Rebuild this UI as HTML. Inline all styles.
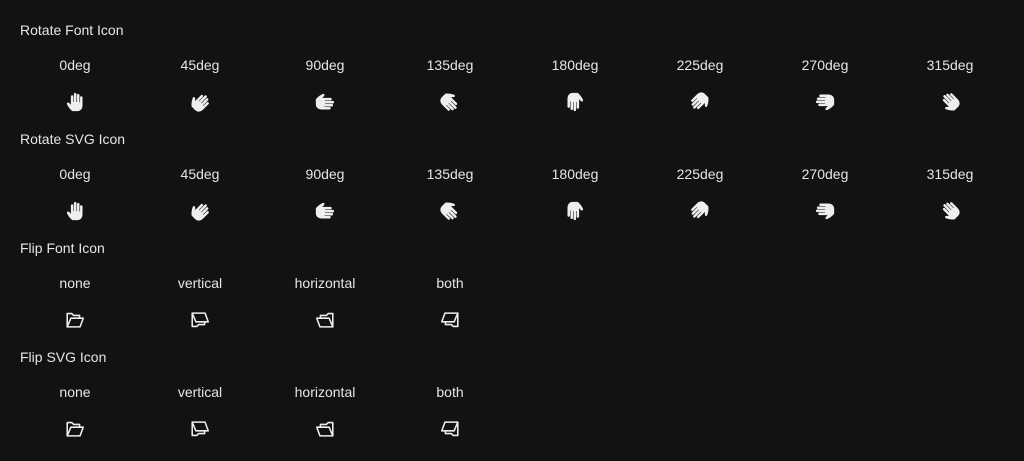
<!DOCTYPE html>
<html><head><style>
body{margin:0;background:#121212;color:#e6e6e6;font-family:"Liberation Sans",sans-serif;font-size:14px;width:1024px;height:461px;overflow:hidden;position:relative}
.h{position:absolute;left:20px}
.l{position:absolute;width:125px;text-align:center}
.i{position:absolute;width:22px;height:22px}
</style></head><body>
<svg width="0" height="0" style="position:absolute">
<defs>
<g id="hand"><path fill="#eee" d="M8 22 C5 19.5 3.5 17 2.3 14.5 C1.6 13 3.2 11.8 4.5 13 L6.5 15 V6 C6.5 4.2 9.2 4.2 9.2 6 V12 H9.8 V3.5 C9.8 1.6 12.6 1.6 12.6 3.5 V12 H13.2 V4.5 C13.2 2.7 15.9 2.7 15.9 4.5 V12.5 H16.5 V7 C16.5 5.3 19.2 5.3 19.2 7 V15.5 C19.2 19.5 16.8 22 13.5 22 Z"/></g>
<g id="fold"><path fill="none" stroke="#eee" stroke-width="1.7" stroke-linejoin="round" d="M3.5 19.5 V5 H8.5 L10.5 7 H17 V10 M3.5 19.5 H17.5 L21 10 H7.5 Z"/></g>
</defs></svg>
<div class="h" style="top:22px">Rotate Font Icon</div>
<div class="h" style="top:131px">Rotate SVG Icon</div>
<div class="h" style="top:240px">Flip Font Icon</div>
<div class="h" style="top:349px">Flip SVG Icon</div>
<div id="c"></div>
<script>
var c=document.getElementById('c'),h='';
var degs=[0,45,90,135,180,225,270,315];
[0,109].forEach(function(o){degs.forEach(function(d,k){var cx=75+125*k;
h+='<div class="l" style="left:'+(cx-62.5)+'px;top:'+(57+o)+'px">'+d+'deg</div>';
h+='<svg class="i" viewBox="0 0 22 24" style="left:'+(cx-11)+'px;top:'+(91+o)+'px;transform:rotate('+d+'deg)"><use href="#hand"/></svg>';});});
var fl=[['none','1,1'],['vertical','1,-1'],['horizontal','-1,1'],['both','-1,-1']];
[0,109].forEach(function(o){fl.forEach(function(f,k){var cx=75+125*k;
h+='<div class="l" style="left:'+(cx-62.5)+'px;top:'+(275+o)+'px">'+f[0]+'</div>';
h+='<svg class="i" viewBox="0 0 24 24" style="left:'+(cx-11)+'px;top:'+(309+o)+'px;transform:scale('+f[1]+')"><use href="#fold"/></svg>';});});
c.innerHTML=h;
</script>
</body></html>
